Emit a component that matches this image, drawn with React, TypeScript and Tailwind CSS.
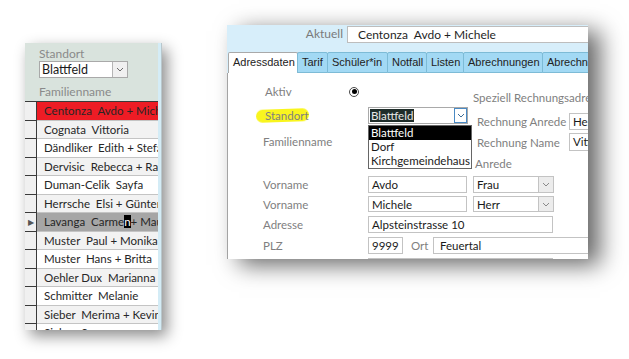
const calibri = "font-['Lato','Liberation_Sans',sans-serif]"
const segoe = "font-['Liberation_Sans','Open_Sans',sans-serif]"

function Chevron({ color = '#6b6b6b' }: { color?: string }) {
  return (
    <svg width="8" height="5" viewBox="0 0 8 5">
      <path d="M1 1 L4 4 L7 1" fill="none" stroke={color} strokeWidth="1" />
    </svg>
  )
}

const rows = [
  { t: 'Centonza  Avdo + Michele', bg: 'bg-[#ee1c25]' },
  { t: 'Cognata  Vittoria', bg: 'bg-[#f2f2f2]' },
  { t: 'Dändliker  Edith + Stefan', bg: 'bg-white' },
  { t: 'Dervisic  Rebecca + Rasim', bg: 'bg-[#f2f2f2]' },
  { t: 'Duman-Celik  Sayfa', bg: 'bg-white' },
  { t: 'Herrsche  Elsi + Günter', bg: 'bg-[#f2f2f2]' },
  { t: 'lavanga', bg: 'bg-[#a6a6a6]' },
  { t: 'Muster  Paul + Monika', bg: 'bg-[#f2f2f2]' },
  { t: 'Muster  Hans + Britta', bg: 'bg-white' },
  { t: 'Oehler Dux  Marianna Dux', bg: 'bg-[#f2f2f2]' },
  { t: 'Schmitter  Melanie', bg: 'bg-white' },
  { t: 'Sieber  Merima + Kevin', bg: 'bg-[#f2f2f2]' },
  { t: 'Sieber  Sara', bg: 'bg-white' },
]

function LeftPanel() {
  return (
    <div className={`ml-[25px] mt-[43px] flex h-[287px] w-[137px] shrink-0 shadow-[5px_6px_14px_rgba(0,0,0,0.45)] ${calibri}`}>
      <div className="flex w-[133px] flex-col overflow-hidden">
        {/* form header */}
        <div className="h-[58px] shrink-0 bg-[#d9e3dd] pl-[14px] pt-[4px]">
          <div className="text-[12px] leading-[14px] text-[#8a8a8a]">Standort</div>
          <div className="flex h-[17px] w-[89px] border border-[#a9a9a9] bg-white">
            <span className="flex-1 pl-[2px] text-[12.5px] leading-[15px] text-[#1a1a1a]">Blattfeld</span>
            <span className="flex w-[15px] items-center justify-center border-l border-[#b5b5b5] bg-[#f0f0f0]">
              <Chevron />
            </span>
          </div>
          <div className="mt-[7px] text-[12px] leading-[14px] text-[#8a8a8a]">Familienname</div>
        </div>

        {/* records */}
        <div className="flex flex-col border-t border-[#3a3a3a]">
          {rows.map((r, i) => (
            <div key={i} className={`flex h-[18.5px] shrink-0 ${r.bg}`}>
              <div className="flex w-[12px] shrink-0 items-center justify-center border-b border-r border-[#3a3a3a] bg-[#f0f0f0]">
                {r.t === 'lavanga' && <span className="text-[8px] leading-none text-[#555]">▶</span>}
              </div>
              <div className="flex-1 overflow-hidden whitespace-pre border-b border-[#c4c4c4] pl-[7px] text-[11.5px] leading-[17px] text-[#262626]">
                {r.t === 'lavanga' ? (
                  <>
                    Lavanga  Carme<span className="bg-black text-white">n</span>+ Mauro
                  </>
                ) : (
                  r.t
                )}
              </div>
            </div>
          ))}
        </div>
      </div>
      <div className="w-[4px] border-r border-[#b9c7cc] bg-[#d4ecf6]" />
    </div>
  )
}

function Field({ text, className = '' }: { text?: string; className?: string }) {
  return (
    <div className={`h-full overflow-hidden whitespace-nowrap border border-[#c3c3c3] bg-white pl-[3px] text-[11.5px] leading-[15px] text-[#1a1a1a] ${className}`}>
      {text}
    </div>
  )
}

function Combo({ text, className = '' }: { text: string; className?: string }) {
  return (
    <div className={`flex h-full border border-[#c3c3c3] bg-white ${className}`}>
      <span className="flex-1 pl-[3px] text-[11.5px] leading-[15px] text-[#1a1a1a]">{text}</span>
      <span className="flex w-[15px] items-center justify-center border-l border-[#c3c3c3] bg-[#ececec]">
        <Chevron color="#8a8a8a" />
      </span>
    </div>
  )
}

const tabs = [
  { t: 'Adressdaten', w: 'w-[70px]', active: true },
  { t: 'Tarif', w: 'w-[31px]' },
  { t: 'Schüler*in', w: 'w-[61px]' },
  { t: 'Notfall', w: 'w-[40px]' },
  { t: 'Listen', w: 'w-[38px]' },
  { t: 'Abrechnungen', w: 'w-[80px]' },
  { t: 'Abrechnungen', w: 'w-[60px]' },
]

function RightPanel() {
  const label = 'text-[11.5px] leading-[13px] text-[#808080] whitespace-nowrap'
  return (
    <div className={`ml-[65px] mt-[25px] flex h-[234px] w-[361px] shrink-0 flex-col overflow-hidden bg-white shadow-[12px_6px_22px_rgba(0,0,0,0.6)] ${calibri}`}>
      {/* header band */}
      <div className="flex h-[27px] shrink-0 items-start bg-[#d7eefa]">
        <div className="mt-[2px] w-[120px] pr-[4px] text-right text-[12px] leading-[14px] text-[#7a7a7a]">Aktuell</div>
        <div className="mt-[1px] h-[17px] flex-1 whitespace-pre border border-r-0 border-[#bdbdbd] bg-white pl-[10px] text-[12px] leading-[15px] text-[#1f1f1f]">
          Centonza  Avdo + Michele
        </div>
      </div>

      {/* tabs */}
      <div className={`flex h-[21px] shrink-0 items-end bg-[#d7eefa] pl-[1px] ${segoe}`}>
        {tabs.map((t, i) => (
          <div
            key={i}
            className={`h-[21px] shrink-0 overflow-hidden whitespace-nowrap rounded-t-[2px] border pl-[4px] text-[11px] leading-[19px] text-[#222] ${t.w} ${
              t.active ? 'border-b-0 border-[#a9a9a9] bg-white' : '-ml-px border-[#7dbbd6] bg-[#a2d9f4]'
            }`}
          >
            {t.t}
          </div>
        ))}
      </div>

      {/* body */}
      <div className="flex flex-1 flex-col border-l border-[#a3a3a3] bg-white">
        <div className="flex h-[103px] shrink-0">
          {/* left part */}
          <div className="flex w-[245px] shrink-0 flex-col">
            <div className="mt-[12px] flex h-[13px] items-center">
              <div className={`w-[121px] pl-[37px] ${label}`}>Aktiv</div>
              <div className="flex h-[10px] w-[10px] items-center justify-center rounded-full border border-[#4a4a4a] bg-white">
                <div className="h-[5px] w-[5px] rounded-full bg-black" />
              </div>
            </div>
            <div className="mt-[9px] flex h-[17px] items-center">
              <div className={`relative h-[13px] w-[140px] pl-[37px] ${label}`}>
                <span className="absolute left-[28px] top-[0px] h-[13px] w-[53px] -rotate-2 rounded-full bg-[#f9f51e] blur-[0.6px]" />
                <span className="relative">Standort</span>
              </div>
              <div className="relative flex h-[17px] w-[100px] border border-[#a9a9a9] bg-white">
                <span className="flex flex-1 items-center pl-[1px]">
                  <span className="bg-[#1f2d2a] px-[1px] text-[11.5px] leading-[13px] text-[#e8e8e8]">Blattfeld</span>
                </span>
                <span className="flex w-[13px] items-center justify-center border border-[#4a8ac4] bg-white">
                  <Chevron color="#3c6e9a" />
                </span>
                {/* open list */}
                <div className="absolute left-[-1px] top-[17px] z-10 w-[104px] border border-[#666] bg-white text-[11.5px] leading-[14px]">
                  <div className="bg-black pl-[2px] text-white">Blattfeld</div>
                  <div className="pl-[2px] text-[#1a1a1a]">Dorf</div>
                  <div className="pl-[2px] text-[#1a1a1a]">Kirchgemeindehaus</div>
                </div>
              </div>
            </div>
            <div className="mt-[9px] flex h-[17px] items-center">
              <div className={`w-[140px] pl-[35px] ${label}`}>Familienname</div>
              <Field className="w-[99px]" />
            </div>
          </div>

          {/* right part */}
          <div className="flex flex-1 flex-col overflow-hidden">
            <div className={`mt-[18px] ${label}`}>Speziell Rechnungsadresse</div>
            <div className="mt-[9px] flex h-[17px] items-center">
              <div className={`w-[96px] shrink-0 pl-[4px] ${label}`}>Rechnung Anrede</div>
              <Field text="Herr" className="flex-1 border-r-0" />
            </div>
            <div className="mt-[3px] flex h-[18px] items-center">
              <div className={`w-[96px] shrink-0 pl-[4px] ${label}`}>Rechnung Name</div>
              <Field text="Vittoria" className="flex-1 border-r-0" />
            </div>
            <div className={`mt-[6px] pl-[2px] ${label}`}>Anrede</div>
          </div>
        </div>

        <div className="flex h-[17px] shrink-0 items-center pl-[35px]">
          <div className={`w-[105px] ${label}`}>Vorname</div>
          <Field text="Avdo" className="w-[99px]" />
          <Combo text="Frau" className="ml-[6px] w-[81px]" />
        </div>
        <div className="mt-[3px] flex h-[16px] shrink-0 items-center pl-[35px]">
          <div className={`w-[105px] ${label}`}>Vorname</div>
          <Field text="Michele" className="w-[99px]" />
          <Combo text="Herr" className="ml-[6px] w-[81px]" />
        </div>
        <div className="mt-[4px] flex h-[17px] shrink-0 items-center pl-[35px]">
          <div className={`w-[105px] ${label}`}>Adresse</div>
          <Field text="Alpsteinstrasse 10" className="w-[185px]" />
        </div>
        <div className="mt-[4px] flex h-[17px] shrink-0 items-center pl-[35px]">
          <div className={`w-[105px] ${label}`}>PLZ</div>
          <Field text="9999" className="w-[35px]" />
          <div className={`ml-[8px] w-[22px] ${label}`}>Ort</div>
          <Field text="Feuertal" className="flex-1 border-r-0 pl-[6px]" />
        </div>
        <div className="mt-[4px] flex h-[17px] shrink-0 items-center pl-[35px]">
          <div className={`w-[105px] ${label}`}>Telefon</div>
          <Field className="w-[185px]" />
        </div>
      </div>
    </div>
  )
}

export default function App() {
  return (
    <div className="flex h-[359px] w-[629px] items-start overflow-hidden bg-white">
      <LeftPanel />
      <RightPanel />
    </div>
  )
}
